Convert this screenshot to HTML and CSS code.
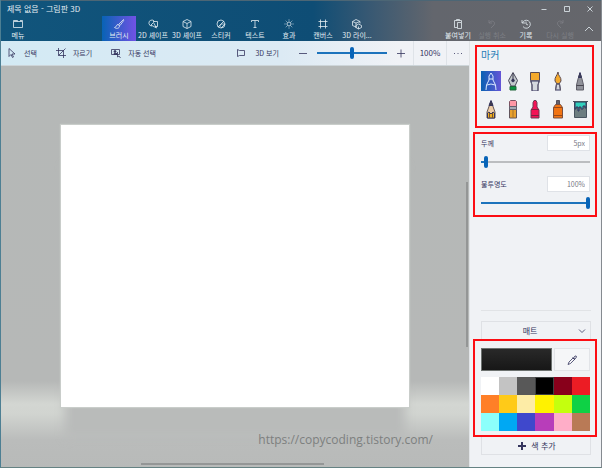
FILE: index.html
```html
<!DOCTYPE html>
<html lang="ko">
<head>
<meta charset="utf-8">
<meta name="viewport" content="width=device-width, initial-scale=1">
<title>제목 없음 - 그림판 3D</title>
<link rel="stylesheet" href="styles.css">
</head>
<body>
<div class="window">
  <header class="header">
    <div class="titlebar">
      <h1 class="title">제목 없음 - 그림판 3D</h1>
      <div class="controls">
        <button class="control" aria-label="최소화"><svg viewBox="0 0 8 8"><path d="M1.500 4.500h5"/></svg></button>
        <button class="control" aria-label="최대화"><svg viewBox="0 0 8 8"><path d="M1.500 1.500h5v5h-5z"/></svg></button>
        <button class="control" aria-label="닫기"><svg viewBox="0 0 8 8"><path d="M1.500 1.500l5 5M6.500 1.500l-5 5"/></svg></button>
      </div>
    </div>
    <nav class="ribbon">
      <button class="tab menu"><svg viewBox="0 0 12 12"><path d="M1.500 3.500h9v6h-9zM1.500 3.500v-1h4v1M8 2.500h2.500v1"/></svg>메뉴</button>
      <div class="tabs">
        <button class="tab active"><svg viewBox="0 0 12 12"><path d="M10.500 1.500L5.500 6.500M10.500 1.500q.5 1-.5 2L7 7.500M5.500 6.500L7 7.500M5 6.500C3 6.500 4 9 1.500 9.500C3.500 11 6.500 10.500 6.500 8z"/></svg>브러시</button>
        <button class="tab"><svg viewBox="0 0 12 12"><path d="M5 8A3 3 0 1 1 7.500 3.500M6 3.500h4.500v5H8M4 7l2.500-2.500L9.500 10z"/></svg>2D 셰이프</button>
        <button class="tab"><svg viewBox="0 0 12 12"><path d="M6 1.500l4 2v5l-4 2-4-2v-5zM2 3.500l4 2 4-2M6 5.500v5"/></svg>3D 셰이프</button>
        <button class="tab"><svg viewBox="0 0 12 12"><path d="M10 6a4 4 0 1 1-4-4q3 0 4 4L6 10M3 9l6-6M5 9c0-3 1-3 5-3"/></svg>스티커</button>
        <button class="tab"><svg viewBox="0 0 12 12"><path d="M2.500 4V2.500h7V4M6 2.500v7M4.500 9.500h3"/></svg>텍스트</button>
        <button class="tab"><svg viewBox="0 0 12 12"><circle cx="6" cy="6" r="2"/><path d="M6 1.500v1M6 9.500v1M1.500 6h1M9.500 6h1M2.800 2.800l.8.8M8.400 8.400l.8.8M2.800 9.200l.8-.8M8.400 3.600l.8-.8"/></svg>효과</button>
        <button class="tab"><svg viewBox="0 0 12 12"><path d="M3.500 1.500v9M8.500 1.500v9M1.500 3.500h9M1.500 8.500h9"/></svg>캔버스</button>
        <button class="tab"><svg viewBox="0 0 12 12"><path d="M5 1.500l4 2v2M5 9L1.500 7.500v-4L5 1.500M1.500 3.500L5 5l4-1.500M5 5v5M7.500 6l3 1.500v2L7.500 11 5 9.500v-2zM7.500 8.500V11"/></svg>3D 라이...</button>
      </div>
      <div class="history">
        <button class="tab"><svg viewBox="0 0 12 12"><path d="M5 9.500H2.500v-7h7v2M4.500 2.500v-1h3v1M5.500 4.500h4v6h-4z"/></svg>붙여넣기</button>
        <button class="tab" disabled><svg viewBox="0 0 12 12"><path d="M3 2v3h3M3 5c3-4 7-1 5 2l-3 3"/></svg>실행 취소</button>
        <button class="tab"><svg viewBox="0 0 12 12"><path d="M2 2v3h3M2.500 5A4 4 0 1 1 3 8.500M6 3.500V6l2 1"/></svg>기록</button>
        <button class="tab" disabled><svg viewBox="0 0 12 12"><path d="M9 2v3H6M9 5C6 1 2 4 4 7l3 3"/></svg>다시 실행</button>
        <button class="collapse" aria-label="리본 접기"><svg viewBox="0 0 12 12"><path d="M2 8l4-4 4 4"/></svg></button>
      </div>
    </nav>
  </header>
  <div class="workspace">
    <main class="editor">
      <div class="toolbar">
        <button class="tool select"><svg viewBox="0 0 12 12"><path d="M3 1.500v8l2-2 1.500 3 1-.5L6 7h3z"/></svg>선택</button>
        <button class="tool crop"><svg viewBox="0 0 12 12"><path d="M3.500 1v7.500H11M1 3.500h7.500V11M3.500 8.500l7-7"/></svg>자르기</button>
        <button class="tool auto"><svg viewBox="0 0 12 12"><path d="M1.500 2.500h8v5h-8z"/><circle cx="5" cy="4.500" r="1" fill="currentColor"/><path d="M4 7.500v-1h3v1z" fill="currentColor"/><path d="M7.500 5v5l1.500-1 1.500 2"/></svg>자동 선택</button>
        <div class="zoom">
          <button class="tool view"><svg viewBox="0 0 12 12"><path d="M2.500 2.500l2 1h5v5h-5l-2 1z"/></svg>3D 보기</button>
          <button class="step" aria-label="축소"><svg viewBox="0 0 12 12"><path d="M2 6.500h8"/></svg></button>
          <input class="range" type="range" min="0" max="100" value="50" aria-label="확대/축소">
          <button class="step plus" aria-label="확대"><svg viewBox="0 0 12 12"><path d="M2 6.500h8M6 2.500v8"/></svg></button>
          <button class="percent">100%</button>
          <button class="more" aria-label="자세히"><svg viewBox="0 0 12 12"><path d="M2 6.500h1M5.500 6.500h1M9 6.500h1"/></svg></button>
        </div>
      </div>
      <div class="stage">
        <div class="paper"></div>
        <a class="credit" href="https://copycoding.tistory.com/">https://copycoding.tistory.com/</a>
        <span class="scroll vertical"></span>
        <span class="scroll horizontal"></span>
      </div>
    </main>
    <aside class="panel">
      <section class="group brushes">
        <h2 class="heading">마커</h2>
        <div class="brush-grid">
          <button class="brush chosen" aria-label="마커"><svg viewBox="0 0 20 20"><path d="M5 19l.5-5L8 9V5l2-3 2 3v4l2.500 5 .5 5M6 14q4-2 8 0M8 8h4" fill="none" stroke="#dceaff"/></svg></button>
          <button class="brush" aria-label="캘리그래피 펜"><svg viewBox="0 0 20 20"><path d="M10 1.500l4.500 8L12 15H8L5.500 9.500z" fill="#c3c9cc" stroke="#4b4a5c"/><path d="M10 2v7" stroke="#363448"/><circle cx="10" cy="9.500" r="1.300" fill="#363448"/><path d="M7 15.500h6v3.500H7z" fill="#0a9440" stroke="#20643a"/></svg></button>
          <button class="brush" aria-label="유화 브러시"><svg viewBox="0 0 20 20"><path d="M5.500 1.500h9v8h-9z" fill="#f5aa2c" stroke="#5a4a52"/><path d="M6 10h8l-1 4v6H7v-6z" fill="#d5d8de"/><path d="M5.500 10l1.500 4v5.500M14.500 10L13 14v5.500M5 9.500h10" fill="none" stroke="#666275"/></svg></button>
          <button class="brush" aria-label="수채화"><svg viewBox="0 0 20 20"><path d="M10 1c0 4 3.500 5 3 9l-2 3H9l-2-3c-.5-4 2-5 3-9z" fill="#f5aa2c" stroke="#5b4950"/><path d="M8.500 13h3l1 6h-5z" fill="#d4d6dc"/><path d="M8.500 13l-1 6.500M11.500 13l1 6.500M8 13h4" stroke="#65606f"/></svg></button>
          <button class="brush" aria-label="픽셀 펜"><svg viewBox="0 0 20 20"><path d="M10 2l2 6 1.500 6v5h-7v-5L8 8z" fill="#90929a" stroke="#5f5e69"/><path d="M10 1.500l1.500 5h-3z" fill="#44424e"/><path d="M6.500 14.500h7" fill="none" stroke="#484650"/></svg></button>
          <button class="brush" aria-label="연필"><svg viewBox="0 0 20 20"><path d="M10 2l4 11v6H6v-6z" fill="#eecda6" stroke="#655654"/><path d="M10 1.500l2 5H8z" fill="#3f3b48"/><path d="M6.500 14l1.500-1 2 2 2-2 1.500 1v5h-7z" fill="#efae22"/><path d="M8.500 14v5M11.500 14v5" stroke="#76552d"/></svg></button>
          <button class="brush" aria-label="지우개"><svg viewBox="0 0 20 20"><path d="M6.500 8V2.500l1-1h5l1 1V8z" fill="#ff97a5" stroke="#7c5362"/><path d="M6.500 10h7v9h-7z" fill="#e9a12d" stroke="#61545b"/><path d="M6.500 7.500h7v3h-7z" fill="#a7a9b4" stroke="#65606e"/><path d="M10 11v8" stroke="#a8742d"/></svg></button>
          <button class="brush" aria-label="크레용"><svg viewBox="0 0 20 20"><path d="M8 8V3.500l1-2h2l1 2V8l2 3v8H6v-8z" fill="#f41355" stroke="#6c3c54"/><path d="M6 10.500h8M6 16.500h8" stroke="#812242"/></svg></button>
          <button class="brush" aria-label="스프레이"><svg viewBox="0 0 20 20"><path d="M8.500 1.500h3v4h-3z" fill="#646069" stroke="#55515e"/><path d="M5.500 19V8.500l2-3h5l2 3V19z" fill="#f17413" stroke="#795042"/><path d="M5.500 8.500h9M5.500 16.500h9" stroke="#984919"/></svg></button>
          <button class="brush" aria-label="채우기"><svg viewBox="0 0 20 20"><path d="M4.500 2.500h12v16h-12z" fill="#6c7d80" stroke="#485460"/><path d="M5 3h11v6h-1V7h-2v3h-2V8H9v4H8V8H6v2H5z" fill="#32d0bd"/><path d="M3 2.500h15" stroke="#485460"/></svg></button>
        </div>
      </section>
      <section class="group settings">
        <div class="field"><label for="thickness">두께</label><input id="thickness" class="value" type="text" value="5px"></div>
        <input class="range low" type="range" min="0" max="100" value="3" aria-label="두께 조절">
        <div class="field"><label for="opacity">불투명도</label><input id="opacity" class="value" type="text" value="100%"></div>
        <input class="range full" type="range" min="0" max="100" value="100" aria-label="불투명도 조절">
      </section>
      <div class="material"><button class="finish"><span>매트</span><svg viewBox="0 0 12 12"><path d="M3 4.500l3 3 3-3"/></svg></button></div>
      <section class="group colors">
        <div class="current">
          <button class="preview" aria-label="현재 색"></button>
          <button class="picker" aria-label="색 선택기"><svg viewBox="0 0 12 12"><path d="M2 10.500l1-2.500 4-4 1.500 1.500-4 4zM6.500 3.500l2.500 2.500M7.500 4l1.500-2q1.500-.5 1.500 1L9 5z"/></svg></button>
        </div>
        <div class="palette">
          <button class="swatch white" aria-label="흰색"></button><button class="swatch silver" aria-label="밝은 회색"></button><button class="swatch gray" aria-label="회색"></button><button class="swatch black" aria-label="검정"></button><button class="swatch maroon" aria-label="진한 빨강"></button><button class="swatch red" aria-label="빨강"></button>
          <button class="swatch orange" aria-label="주황"></button><button class="swatch gold" aria-label="금색"></button><button class="swatch cream" aria-label="크림색"></button><button class="swatch yellow" aria-label="노랑"></button><button class="swatch lime" aria-label="라임"></button><button class="swatch green" aria-label="녹색"></button>
          <button class="swatch aqua" aria-label="옥색"></button><button class="swatch blue" aria-label="파랑"></button><button class="swatch indigo" aria-label="남색"></button><button class="swatch purple" aria-label="보라"></button><button class="swatch pink" aria-label="분홍"></button><button class="swatch brown" aria-label="갈색"></button>
        </div>
      </section>
      <button class="add"><svg viewBox="0 0 12 12"><path d="M2 6h8M6 2v8"/></svg>색 추가</button>
    </aside>
  </div>
</div>
</body>
</html>
```

FILE: styles.css
```css
* { box-sizing: border-box; }

body {
  margin: 0;
  font: 7px/10px "Noto Sans CJK KR", sans-serif;
  color: #35355e;
}

button, input { font: inherit; color: inherit; margin: 0; padding: 0; }
button { border: 0; background: none; white-space: nowrap; }
h1, h2 { margin: 0; font-weight: 400; }
svg { display: block; width: 12px; height: 12px; flex: none; fill: none; stroke: currentColor; stroke-width: .8; }

.window {
  display: flex;
  flex-direction: column;
  min-height: 100vh;
  border-left: 1px solid #4d7f93;
  border-right: 1px solid #858a90;
  border-bottom: 1px solid #658283;
}

/* Title bar and ribbon */
.header {
  color: #e4edf2;
  background: linear-gradient(90deg, #11557c 0%, #0e4d75 52%, #365873 61%, #63666d 72%, #65666b 100%);
}
.titlebar { display: flex; justify-content: space-between; height: 16px; border-top: 1px solid #4c6675; }
.title { padding: 2px 6px; font-size: 8px; line-height: 11px; }
.controls { display: flex; }
.control { display: grid; place-items: center; width: 23px; }
.control svg { width: 8px; height: 8px; }
.ribbon { display: flex; height: 25px; }
.tab {
  display: flex;
  flex-direction: column;
  align-items: center;
  width: 34px;
  padding-top: 2px;
}
.tab:disabled { color: #7d7f85; }
.tabs { display: flex; margin-left: 67px; }
.active { background: linear-gradient(90deg, #0863b5, #7152e5); }
.history { display: flex; margin-left: auto; }
.collapse { display: grid; place-items: center; width: 24px; }

/* Editing area */
.workspace { display: flex; flex: 1; }
.editor { display: flex; flex: 1; flex-direction: column; min-width: 0; }
.toolbar {
  display: flex;
  height: 25px;
  background: linear-gradient(90deg, #d3eaf4 0%, #dceaf4 60%, #f0f2f6 85%);
  border-bottom: 1px solid #cdd5d9;
}
.tool { display: flex; align-items: center; gap: 6px; }
.select { margin-left: 5px; }
.crop { margin-left: 18px; }
.auto { margin-left: 18px; }
.zoom { display: flex; align-items: center; margin-left: auto; }
.view { gap: 8px; margin-right: 18px; }
.zoom .range { width: 70px; margin: 0 8px; }
.percent { width: 34px; height: 24px; margin-left: 6px; border: solid #dfe3e8; border-width: 0 1px; font-size: 8px; }
.more { display: grid; place-items: center; width: 22px; }
.stage {
  position: relative;
  display: flex;
  flex: 1;
  padding: 59px 60px 60px;
  background: linear-gradient(#b5b8b7 0, #b6b8b7 315px, #d3d6d2 338px, #d1d4d0 348px, #babcbb 374px, #b8bab9 100%);
}
.paper { flex: 1; background: #fff; box-shadow: 0 0 1px 1px #c9cdca, 0 35px 10px -4px #b9bbba; }
.credit {
  position: absolute;
  right: 36px;
  bottom: 18px;
  color: #7d807f;
  font: 12px/18px "Open Sans", sans-serif;
  text-decoration: none;
}
.scroll { position: absolute; background: #949696; }
.vertical { right: 1px; top: 29%; width: 2px; height: 41%; }
.horizontal { left: 30%; bottom: 2px; width: 39%; height: 2px; }

/* Sliders */
.range {
  appearance: none;
  display: block;
  width: 100%;
  height: 12px;
  background: linear-gradient(#1c73bc, #1c73bc) center / 100% 2px no-repeat;
}
.range::-webkit-slider-thumb {
  appearance: none;
  width: 4px;
  height: 12px;
  border-radius: 2px;
  background: #0864b7;
}
.low { background: linear-gradient(90deg, #1c73bc 4%, #bbbdc0 4%) center / 100% 2px no-repeat; }

/* Brush and colour panel */
.panel {
  display: flex;
  flex-direction: column;
  width: 132px;
  padding: 4px 4px 12px 3px;
  border-left: 1px solid #e1e4e7;
  background: #f0f2f5;
}
.group { border: 2px solid #fc0d13; }
.brushes { height: 83px; margin: 0 3px 4px 2px; padding: 1px 0 6px 4px; }
.heading { color: #247bb6; font-size: 10px; line-height: 13px; }
.brush-grid { display: grid; grid-template-columns: repeat(5, 1fr); row-gap: 8px; margin-top: 10px; }
.brush { width: 20px; height: 20px; }
.brush svg { width: 20px; height: 20px; stroke-width: 1; }
.chosen { background: linear-gradient(90deg, #0961b2, #6555d7); }
.settings { height: 85px; padding: 1px 5px 0 6px; }
.field { display: flex; align-items: center; justify-content: space-between; height: 16px; }
.value { width: 43px; height: 16px; padding: 0 4px; border: 1px solid #dfe2e7; background: #fff; color: #777985; text-align: right; }
.settings .range { margin: 5px 0 8px; }
.material { margin: auto 6px 0 8px; padding-top: 10px; border-top: 1px solid #e1e3e6; }
.finish { display: grid; grid-template-columns: 1fr 12px; align-items: center; width: 100%; height: 18px; padding: 0 2px; border: 1px solid #dfe1e5; border-bottom: 0; font-size: 8px; }
.colors { padding: 7px 5px 4px 6px; }
.current { display: grid; grid-template-columns: 2fr 1fr; gap: 2px; height: 23px; }
.preview { border: 1px solid #6c716f; background: linear-gradient(#292929, #171717); }
.picker { display: grid; place-items: center; border: 1px solid #e2e4e8; background: #f5f6f8; }
.palette { display: grid; grid-template-columns: repeat(6, 1fr); grid-auto-rows: 18px; margin-top: 6px; }
.white { background: #fff; }
.silver { background: #c3c3c3; }
.gray { background: #585858; }
.black { background: #000; border: 1px solid #3d3f40; }
.maroon { background: #88001b; }
.red { background: #ec1c24; }
.orange { background: #ff7f27; }
.gold { background: #ffca18; }
.cream { background: #fdeca6; }
.yellow { background: #fff200; }
.lime { background: #c4ff0e; }
.green { background: #0ed145; }
.aqua { background: #8cfffb; }
.blue { background: #00a8f3; }
.indigo { background: #3f48cc; }
.purple { background: #b83dba; }
.pink { background: #ffaec8; }
.brown { background: #b97a56; }
.add { display: flex; align-items: center; justify-content: center; gap: 3px; height: 18px; margin: 0 6px 0 8px; border: 1px solid #dfe1e5; border-top: 0; font-size: 8px; }
.add svg { stroke-width: 2; }
```
